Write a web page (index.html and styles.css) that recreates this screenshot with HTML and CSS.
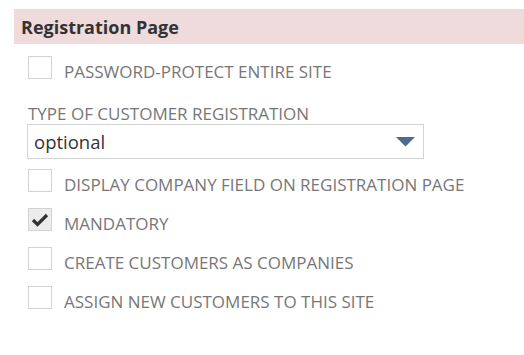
FILE: index.html
```html
<html>
  <head>
    <title>Registration Page</title>
    <meta charset="utf-8" />
    <link rel="stylesheet" href="styles.css">
  </head>
  <body>
    <header>Registration Page</header>
    <div id="wrapper">
      <label class="check">
        <span class="box"></span><span class="text">PASSWORD-PROTECT ENTIRE SITE</span>
      </label>
      <div class="field">
        <h2>TYPE OF CUSTOMER REGISTRATION</h2>
        <div class="select">
          <span>optional</span>
          <svg class="arrow" width="19" height="10" viewBox="0 0 19 10">
            <path d="M0 0 L19 0 L9.5 9.5 Z" fill="#4d6b8f"/>
          </svg>
        </div>
      </div>
      <label class="check">
        <span class="box"></span><span class="text">DISPLAY COMPANY FIELD ON REGISTRATION PAGE</span>
      </label>
      <label class="check">
        <span class="box checked">
          <svg width="18" height="14" viewBox="0 0 18 14">
            <path d="M2 7 L6.5 11.5 L16 2" fill="none" stroke="#333" stroke-width="3.2"/>
          </svg>
        </span><span class="text">MANDATORY</span>
      </label>
      <label class="check">
        <span class="box"></span><span class="text">CREATE CUSTOMERS AS COMPANIES</span>
      </label>
      <label class="check">
        <span class="box"></span><span class="text">ASSIGN NEW CUSTOMERS TO THIS SITE</span>
      </label>
    </div>
  </body>
</html>
```
FILE: styles.css
```css
* {
  padding: 0;
  margin: 0;
  box-sizing: border-box;
}
body  {
  font-family: "Open Sans", sans-serif;
  color: #777;
  background: white;
}
header  {
  margin: 9px 0 0 14px;
  height: 35px;
  line-height: 33px;
  padding: 2px 0 0 7px;
  background-color: #efdbdc;
  color: #333;
  font-weight: 700;
  font-size: 18px;
}
#wrapper  {
  padding: 12px 0 0 28px;
}
.check  {
  display: flex;
  align-items: flex-start;
  height: 24px;
  font-size: 17px;
  margin-bottom: 15px;
}
.text  {
  line-height: 24px;
  padding-top: 4px;
}
.box  {
  flex: none;
  width: 24px;
  height: 23px;
  border: 1px solid #d3d3d3;
  margin-right: 12px;
  display: flex;
  align-items: center;
  justify-content: center;
}
.box.checked  {
  background-color: #ececec;
}
.field  {
  margin-top: 24px;
  margin-bottom: 10px;
}
h2  {
  font-weight: 400;
  font-size: 17px;
  line-height: 20px;
}
.select  {
  margin-left: -1px;
  width: 397px;
  height: 35px;
  border: 1px solid #d3d3d3;
  display: flex;
  align-items: center;
  justify-content: space-between;
  padding: 0 8px 0 6px;
  color: #333;
  font-size: 18.5px;
}
```
